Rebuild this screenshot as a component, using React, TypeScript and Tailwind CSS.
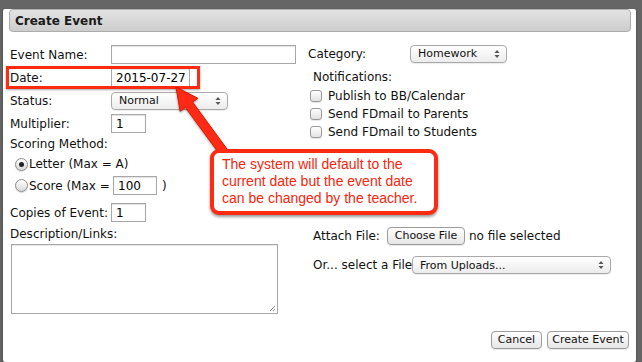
import React from "react";

const FONT = "font-['DejaVu_Sans',sans-serif]";

function SelectBox({ label, width }: { label: string; width: string }) {
  return (
    <div
      className={`${width} h-[18px] flex items-center justify-between rounded-[4px] border border-[#a9a9a9] bg-gradient-to-b from-white to-[#ececec] pl-[7px] pr-[6px] text-[11px] text-[#111] shadow-[0_1px_1px_rgba(0,0,0,0.08)]`}
    >
      <span className="leading-none">{label}</span>
      <svg width="6" height="10" viewBox="0 0 6 10">
        <path d="M3 1 L5.5 4 L0.5 4 Z" fill="#555" />
        <path d="M3 9 L5.5 6 L0.5 6 Z" fill="#555" />
      </svg>
    </div>
  );
}

function TextBox({ value, width }: { value?: string; width: string }) {
  return (
    <div
      className={`${width} h-[19px] flex items-center border border-[#a8a8a8] shadow-[inset_0_1px_1px_rgba(0,0,0,0.12)] bg-white pl-[4px] text-[12px] text-black`}
    >
      {value}
    </div>
  );
}

function Radio({ checked }: { checked?: boolean }) {
  return (
    <span className="w-[13px] h-[13px] rounded-full border border-[#8d8d8d] bg-gradient-to-b from-white to-[#d9d9d9] flex items-center justify-center shadow-[0_1px_1px_rgba(0,0,0,0.15)]">
      {checked && <span className="w-[5px] h-[5px] rounded-full bg-[#222]" />}
    </span>
  );
}

function Check({ label }: { label: string }) {
  return (
    <div className="h-[18px] flex items-center">
      <span className="ml-[2px] w-[12px] h-[12px] rounded-[3px] border border-[#999] bg-gradient-to-b from-white to-[#e2e2e2] shadow-[0_1px_1px_rgba(0,0,0,0.1)]" />
      <span className="ml-[6px]">{label}</span>
    </div>
  );
}

function Button({ label, width }: { label: string; width: string }) {
  return (
    <div
      className={`${width} h-[18px] flex items-center justify-center rounded-[4px] border border-[#9c9c9c] bg-gradient-to-b from-white to-[#e6e6e6] text-[11px] text-[#111] shadow-[0_1px_1px_rgba(0,0,0,0.1)]`}
    >
      {label}
    </div>
  );
}

export default function App() {
  return (
    <div className={`relative w-[642px] h-[362px] bg-[#656565] pt-[3px] pl-[3px] overflow-hidden ${FONT}`}>
      {/* dialog */}
      <div className="w-[633px] h-[353px] bg-white rounded-[2px] shadow-[0_1px_2px_rgba(0,0,0,0.5)] text-[12px] text-[#111]">
        <div className="ml-[6px] mt-[6px] w-[622px] h-[23px] rounded-[4px] border border-[#acacac] bg-gradient-to-b from-[#e3e3e3] to-[#cdcdcd] flex items-center pl-[5px]">
          <span className="font-bold text-[12px] text-[#1a1a1a]">Create Event</span>
        </div>

        <div className="flex mt-[11px]">
          {/* left column */}
          <div className="w-[305px] pl-[7px] flex flex-col">
            <div className="h-[23px] flex items-center">
              <span className="w-[101px]">Event Name:</span>
              <TextBox width="w-[185px]" />
            </div>
            <div className="h-[23px] flex items-center">
              <span className="w-[101px]">Date:</span>
              <TextBox width="w-[79px]" value="2015-07-27" />
            </div>
            <div className="h-[23px] flex items-center">
              <span className="w-[101px]">Status:</span>
              <SelectBox label="Normal" width="w-[117px]" />
            </div>
            <div className="h-[23px] flex items-center">
              <span className="w-[101px]">Multiplier:</span>
              <TextBox width="w-[35px]" value="1" />
            </div>
            <div className="h-[18px] flex items-center">Scoring Method:</div>
            <div className="h-[22px] flex items-center pl-[5px] gap-[1px]">
              <Radio checked />
              <span>Letter (Max = A)</span>
            </div>
            <div className="h-[21px] flex items-center pl-[5px] gap-[1px]">
              <Radio />
              <span className="w-[83px]">Score (Max =</span>
              <TextBox width="w-[44px]" value="100" />
              <span className="ml-[4px]">)</span>
            </div>
            <div className="mt-[5px] h-[23px] flex items-center">
              <span className="w-[101px]">Copies of Event:</span>
              <TextBox width="w-[35px]" value="1" />
            </div>
            <div className="h-[19px] flex items-center">Description/Links:</div>
            <div className="ml-[1px] mt-[1px] w-[267px] h-[70px] border border-[#a8a8a8] shadow-[inset_0_1px_1px_rgba(0,0,0,0.1)] relative">
              <svg className="absolute right-[1px] bottom-[1px]" width="8" height="8" viewBox="0 0 8 8">
                <path d="M7 2 L2 7 M7 5 L5 7" stroke="#888" strokeWidth="1" />
              </svg>
            </div>
          </div>

          {/* right column */}
          <div className="flex-1 flex flex-col">
            <div className="h-[21px] flex items-center">
              <span className="w-[102px]">Category:</span>
              <SelectBox label="Homework" width="w-[97px]" />
            </div>
            <div className="mt-[2px] h-[21px] flex items-center pl-[5px]">Notifications:</div>
            <Check label="Publish to BB/Calendar" />
            <Check label="Send FDmail to Parents" />
            <Check label="Send FDmail to Students" />
            <div className="mt-[85px] h-[20px] flex items-center pl-[5px]">
              <span className="w-[74px]">Attach File:</span>
              <Button label="Choose File" width="w-[78px]" />
              <span className="ml-[4px]">no file selected</span>
            </div>
            <div className="mt-[9px] h-[20px] flex items-center pl-[5px]">
              <span className="w-[99px] whitespace-nowrap">Or... select a File</span>
              <SelectBox label="From Uploads..." width="w-[199px]" />
            </div>
          </div>
        </div>

        <div className="mt-[17px] flex justify-end gap-[5px] pr-[7px]">
          <Button label="Cancel" width="w-[51px]" />
          <Button label="Create Event" width="w-[82px]" />
        </div>
      </div>

      {/* date highlight */}
      <div className="absolute left-[6px] top-[66px] w-[194px] h-[23px] border-[3px] border-[#ff2a12] shadow-[0_1px_2px_rgba(0,0,0,0.35)]" />

      {/* arrow */}
      <svg className="absolute left-0 top-0 pointer-events-none" width="642" height="362" viewBox="0 0 642 362">
        <defs>
          <filter id="sh" x="-20%" y="-20%" width="140%" height="140%">
            <feDropShadow dx="0" dy="1" stdDeviation="1" floodColor="#000" floodOpacity="0.4" />
          </filter>
        </defs>
        <polygon
          points="176,87 197.9,98.3 192.6,102.1 231.6,155.3 224.4,160.7 185.4,107.5 180.1,111.3"
          fill="#ff2a12"
          stroke="#d01c04"
          strokeWidth="1"
          strokeLinejoin="round"
          filter="url(#sh)"
        />
      </svg>

      {/* callout */}
      <div className="absolute left-[210px] top-[149px] w-[228px] h-[66px] rounded-[9px] border-[4px] border-[#ff2a12] bg-white shadow-[0_2px_3px_rgba(0,0,0,0.4)] pl-[8px] pt-[3px] font-['Liberation_Sans',sans-serif] text-[14px] leading-[17px] text-[#f5260e]">
        The system will default to the
        <br />
        current date but the event date
        <br />
        can be changed by the teacher.
      </div>
    </div>
  );
}
